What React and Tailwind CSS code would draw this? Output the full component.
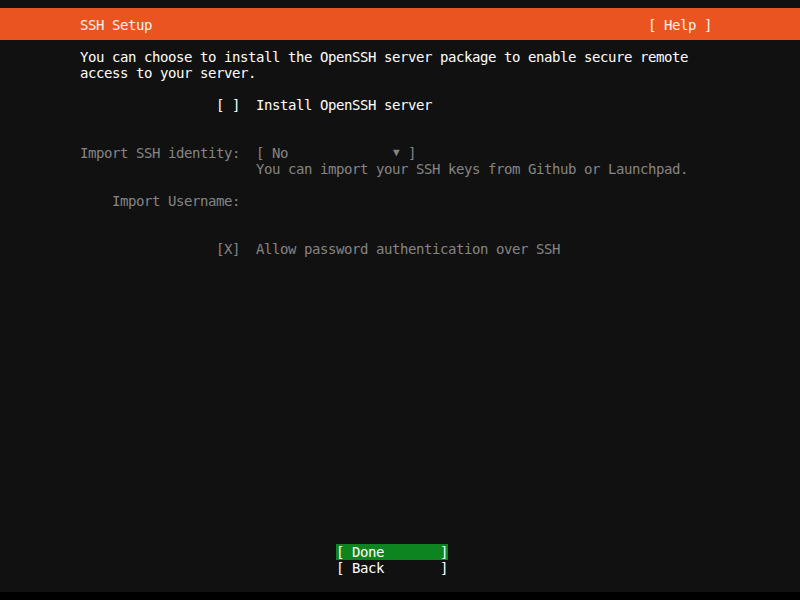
export default function App() {
  const mono = { fontFamily: '"DejaVu Sans Mono", "Liberation Mono", monospace' };

  return (
    <div
      className="w-[800px] h-[600px] bg-[#111111] text-white flex flex-col text-[14px] leading-4 tracking-[-0.43px] overflow-hidden"
      style={mono}
    >
      <div className="h-2" />
      {/* header bar */}
      <div className="h-8 bg-[#e95420] flex items-center justify-between pl-[80px] pr-[88px] pt-[2px] text-[#fdf2ec]">
        <span>SSH Setup</span>
        <span className="whitespace-pre">[ Help ]</span>
      </div>

      <div className="flex-1 flex flex-col pl-[80px] pt-[9px]">
        <div className="h-4">You can choose to install the OpenSSH server package to enable secure remote</div>
        <div className="h-4">access to your server.</div>
        <div className="h-4" />

        <div className="h-4 flex">
          <div className="w-[160px] text-right whitespace-pre">[ ]</div>
          <div className="ml-4">Install OpenSSH server</div>
        </div>
        <div className="h-8" />

        <div className="flex text-[#858585]">
          <div className="w-[160px] text-right">Import SSH identity:</div>
          <div className="ml-4 flex flex-col">
            <div className="h-4 flex whitespace-pre">
              <span>{'[ No             '}</span>
              <span className="w-2 text-center text-[11px] leading-4">▼</span>
              <span>{' ]'}</span>
            </div>
            <div className="h-4">You can import your SSH keys from Github or Launchpad.</div>
          </div>
        </div>
        <div className="h-4" />

        <div className="h-4 flex text-[#858585]">
          <div className="w-[160px] text-right">Import Username:</div>
        </div>
        <div className="h-8" />

        <div className="h-4 flex text-[#858585]">
          <div className="w-[160px] text-right">[X]</div>
          <div className="ml-4">Allow password authentication over SSH</div>
        </div>

        <div className="flex-1" />

        {/* buttons */}
        <div className="flex flex-col items-start pl-[256px]">
          <div className="h-4 w-[112px] bg-[#0e8420] whitespace-pre pt-px leading-[15px]">{'[ Done       ]'}</div>
          <div className="h-4 w-[112px] whitespace-pre pt-px leading-[15px]">{'[ Back       ]'}</div>
        </div>
        <div className="h-4" />
      </div>
      <div className="h-2 bg-black" />
    </div>
  );
}
